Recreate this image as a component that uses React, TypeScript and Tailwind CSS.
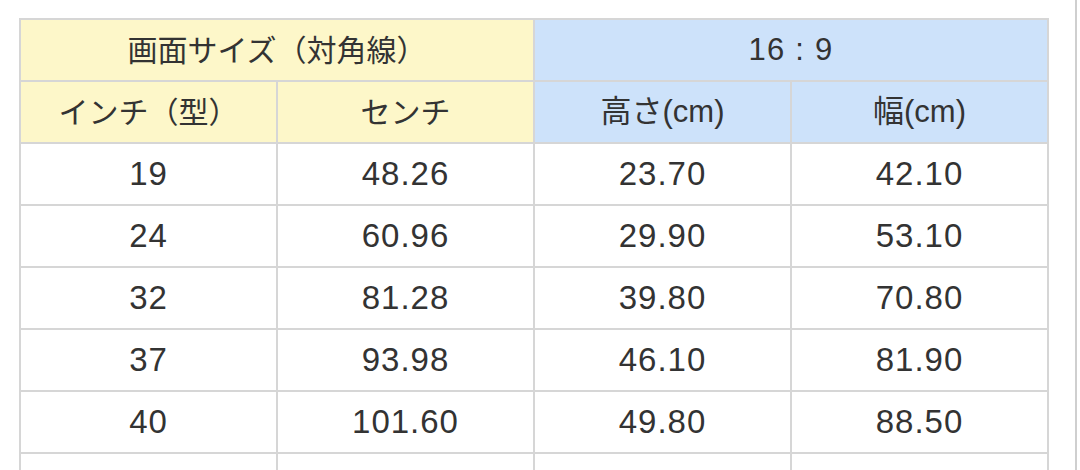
const rows = [
  ["19", "48.26", "23.70", "42.10"],
  ["24", "60.96", "29.90", "53.10"],
  ["32", "81.28", "39.80", "70.80"],
  ["37", "93.98", "46.10", "81.90"],
  ["40", "101.60", "49.80", "88.50"],
  ["42", "106.68", "52.30", "93.00"],
];

const jp = "font-['Liberation_Sans','Noto_Sans_CJK_JP',sans-serif]";

export default function App() {
  return (
    <div className="w-[1080px] h-[470px] overflow-hidden bg-white flex">
      <div className="flex-1 pt-[18px] pl-[19px]">
        <table className={`border-collapse table-fixed text-[#333] ${jp}`}>
          <colgroup>
            <col className="w-[257px]" />
            <col className="w-[257px]" />
            <col className="w-[257px]" />
            <col className="w-[257px]" />
          </colgroup>
          <thead>
            <tr className="h-[62px]">
              <th colSpan={2} className="bg-[#fdf7c9] border-2 border-[#d6d6d6] text-[30px] font-normal">
                画面サイズ（対角線）
              </th>
              <th colSpan={2} className="bg-[#cde2fa] border-2 border-[#d6d6d6] text-[31px] font-normal tracking-[0.04em]">
                16 : 9
              </th>
            </tr>
            <tr className="h-[62px]">
              <th className="bg-[#fdf7c9] border-2 border-[#d6d6d6] text-[30px] font-normal">インチ（型）</th>
              <th className="bg-[#fdf7c9] border-2 border-[#d6d6d6] text-[30px] font-normal">センチ</th>
              <th className="bg-[#cde2fa] border-2 border-[#d6d6d6] text-[31px] font-normal">高さ(cm)</th>
              <th className="bg-[#cde2fa] border-2 border-[#d6d6d6] text-[31px] font-normal">幅(cm)</th>
            </tr>
          </thead>
          <tbody>
            {rows.map((r) => (
              <tr key={r[0]} className="h-[62px]">
                {r.map((v, i) => (
                  <td key={i} className="border-2 border-[#d6d6d6] text-center text-[33px] tracking-[0.03em]">
                    {v}
                  </td>
                ))}
              </tr>
            ))}
          </tbody>
        </table>
      </div>
      <div className="w-[2px] bg-[#cfcfcf] mr-[3px]" />
    </div>
  );
}
